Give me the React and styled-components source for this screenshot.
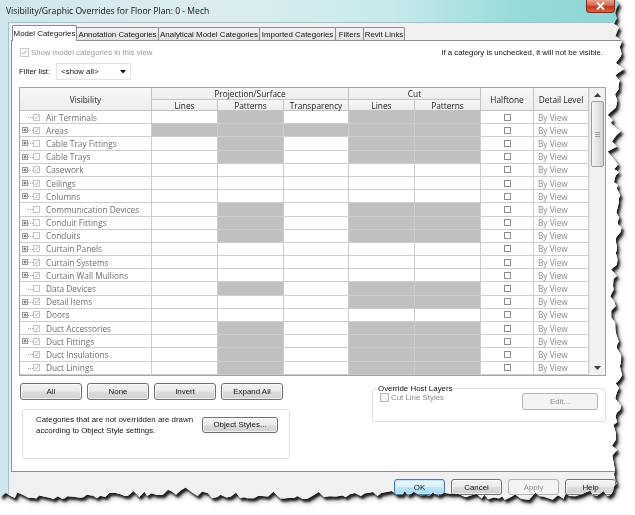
import React from 'react'
import styled, { createGlobalStyle, css } from 'styled-components'

const GlobalStyle = createGlobalStyle`
  html, body {
    margin: 0;
    background: #fff;
  }
  body {
    font-family: "Liberation Sans", Arial, sans-serif;
  }
`

const seeded = (seed) => () => {
  seed = (seed * 16807) % 2147483647
  return seed / 2147483647
}

// ragged "torn paper" outline round the right and bottom of the dialog
const tornEdge = (() => {
  const r = seeded(11)
  const pts = ['0px 0px']
  for (let y = 0; y < 494; ) {
    const spike = r() > 0.8 ? (r() - 0.5) * 12 : 0
    const x = 616 + 3 * Math.sin(y / 27) + (r() - 0.5) * 7 + spike
    pts.push(`${x.toFixed(1)}px ${y.toFixed(1)}px`)
    y += 2.5 + r() * 4.5
  }
  for (let x = 610; x > 0; ) {
    const spike = r() > 0.82 ? (r() - 0.5) * 10 : 0
    const y = 495 + 2.5 * Math.sin(x / 37) + (r() - 0.5) * 6 + spike
    pts.push(`${x.toFixed(1)}px ${y.toFixed(1)}px`)
    x -= 2.5 + r() * 4.5
  }
  pts.push('0px 493px')
  return pts.join(', ')
})()

const rows = [
  ['Air Terminals', false, true, '.g.gg'],
  ['Areas', true, true, 'ggggg'],
  ['Cable Tray Fittings', true, false, '.g.gg'],
  ['Cable Trays', true, false, '.g.gg'],
  ['Casework', true, true, '.....'],
  ['Ceilings', true, true, '.....'],
  ['Columns', true, true, '.....'],
  ['Communication Devices', false, false, '.g.gg'],
  ['Conduit Fittings', true, false, '.g.gg'],
  ['Conduits', true, false, '.g.gg'],
  ['Curtain Panels', true, true, '.....'],
  ['Curtain Systems', true, true, '.....'],
  ['Curtain Wall Mullions', true, true, '.....'],
  ['Data Devices', false, false, '.g.gg'],
  ['Detail Items', true, true, '...gg'],
  ['Doors', true, true, '.....'],
  ['Duct Accessories', false, true, '.g.gg'],
  ['Duct Fittings', true, true, '.g.gg'],
  ['Duct Insulations', false, true, '.g.gg'],
  ['Duct Linings', false, true, '.g.gg'],
]

const tabs = [
  ['Model Categories', 65],
  ['Annotation Categories', 83],
  ['Analytical Model Categories', 102],
  ['Imported Categories', 77],
  ['Filters', 29],
  ['Revit Links', 42],
]

const COLS = '132px 66px 66px 65px 66px 66px 53px 55px'
const segoe = '"Open Sans", "Noto Sans", sans-serif'

const Stage = styled.div`
  width: 635px;
  height: 515px;
  filter: drop-shadow(2px 3px 1px rgba(0, 0, 0, 0.8)) drop-shadow(1px 1px 2px rgba(0, 0, 0, 0.4));
`

const Dialog = styled.div`
  width: 635px;
  height: 515px;
  clip-path: polygon(${tornEdge});
  background: linear-gradient(90deg, #cfe6ec 0%, #dcedf1 35%, #c6e9ea 62%, #96dad9 82%, #8bd6d5 100%);
  display: flex;
  flex-direction: column;
`

const TitleBar = styled.div`
  height: 22px;
  flex: none;
  display: flex;
  justify-content: space-between;
  align-items: flex-start;
  padding-left: 6px;
  box-sizing: border-box;
`

const Title = styled.div`
  font-family: ${segoe};
  font-size: 8.6px;
  line-height: 22px;
  color: #111;
`

const CloseButton = styled.div`
  width: 29px;
  height: 13px;
  margin-right: 20px;
  border: 1px solid #7a2a1c;
  border-top: none;
  border-radius: 0 0 4px 4px;
  box-sizing: border-box;
  background: linear-gradient(#e9a58f 0%, #d7664b 45%, #c2381f 55%, #d8643f 100%);
  display: flex;
  align-items: center;
  justify-content: center;
`

const Client = styled.div`
  flex: 1;
  margin: 0 8px;
  background: #f0f0f0;
  border-top: 1px solid #9fc3cb;
  border-left: 1px solid #9fc3cb;
  display: flex;
  flex-direction: column;
`

const TabStrip = styled.div`
  height: 17px;
  padding-left: 4px;
  display: flex;
  align-items: flex-end;
`

const Tab = styled.div`
  box-sizing: border-box;
  width: ${(p) => p.$w}px;
  height: ${(p) => (p.$active ? 16 : 13)}px;
  margin-left: -1px;
  margin-bottom: ${(p) => (p.$active ? -1 : 0)}px;
  border: 1px solid #898c95;
  border-bottom: none;
  border-radius: 2px 2px 0 0;
  background: ${(p) => (p.$active ? '#fff' : 'linear-gradient(#f3f3f3, #e2e2e2)')};
  position: relative;
  z-index: ${(p) => (p.$active ? 2 : 1)};
  display: flex;
  align-items: center;
  justify-content: center;
  font-size: 7.9px;
  color: #111;
  white-space: nowrap;
`

const Panel = styled.div`
  box-sizing: border-box;
  margin-left: 2px;
  width: 614px;
  height: 432px;
  border: 1px solid #898c95;
  background: #fff;
  position: relative;
  z-index: 1;
`

const PanelInner = styled.div`
  width: 587px;
  margin-left: 7px;
`

const ShowRow = styled.div`
  margin-top: 5px;
  height: 12px;
  display: flex;
  align-items: center;
  justify-content: space-between;
  font-size: 7.8px;
`

const ShowLabel = styled.label`
  display: flex;
  align-items: center;
  gap: 2px;
  margin-left: 1px;
  color: #9a9a9a;
`

const Note = styled.span`
  color: #111;
  margin-right: 3px;
`

const Box = styled.span`
  box-sizing: border-box;
  display: inline-flex;
  align-items: center;
  justify-content: center;
  flex: none;
  width: ${(p) => p.$size}px;
  height: ${(p) => p.$size}px;
  border: 1px solid ${(p) => p.$border || '#c6c6c6'};
  background: ${(p) => p.$bg || '#fbfbfb'};
`

const FilterRow = styled.div`
  margin-top: 5px;
  height: 17px;
  display: flex;
  align-items: center;
  gap: 6px;
  font-size: 7.8px;
  color: #111;
`

const Select = styled.div`
  box-sizing: border-box;
  width: 75px;
  height: 17px;
  border: 1px solid #e3e3e3;
  background: #fff;
  display: flex;
  align-items: center;
  justify-content: space-between;
  padding: 0 4px 0 4px;
`

const TableFrame = styled.div`
  margin-top: 7px;
  border: 1px solid #a3a3a3;
  display: flex;
`

const Grid = styled.div`
  width: 569px;
`

const HeadGrid = styled.div`
  display: grid;
  grid-template-columns: ${COLS};
  grid-template-rows: 12px 11px;
`

const Head = styled.div`
  box-sizing: border-box;
  grid-column: ${(p) => p.$col};
  grid-row: ${(p) => p.$row};
  border-right: 1px solid #c3c3c3;
  border-bottom: 1px solid #c3c3c3;
  background: linear-gradient(#f7f7f7, #ededed);
  display: flex;
  align-items: center;
  justify-content: center;
  font-family: ${segoe};
  font-size: 8.3px;
  color: #222;
  white-space: nowrap;
`

const Row = styled.div`
  display: grid;
  grid-template-columns: ${COLS};
  height: 13.2px;
`

const Cell = styled.div`
  box-sizing: border-box;
  border-right: 1px solid #cdcdcd;
  border-bottom: 1px solid #cdcdcd;
  background: ${(p) => (p.$gray ? '#c0c0c0' : '#fff')};
  display: flex;
  align-items: center;
  justify-content: ${(p) => (p.$center ? 'center' : 'flex-start')};
  font-family: ${segoe};
  font-size: 8.3px;
  white-space: nowrap;
  overflow: hidden;
`

const NameCell = styled(Cell)`
  padding-left: 2px;
  color: #6f6f6f;
`

const Expander = styled.span`
  box-sizing: border-box;
  width: 6px;
  height: 6px;
  flex: none;
  border: 1px solid ${(p) => (p.$hidden ? 'transparent' : '#9b9b9b')};
  background: #fff;
  display: inline-flex;
`

const Connector = styled.span`
  width: 5px;
  flex: none;
  border-top: 1px dotted #a5a5a5;
  margin-top: 1px;
`

const Name = styled.span`
  margin-left: 6px;
`

const ByView = styled(Cell)`
  padding-left: 4px;
  color: #8a8a8a;
`

const Scrollbar = styled.div`
  box-sizing: border-box;
  width: 16px;
  border-left: 1px solid #e4e4e4;
  background: #f1f1f1;
  display: flex;
  flex-direction: column;
  align-items: center;
`

const Arrow = styled.div`
  height: 13px;
  flex: none;
  display: flex;
  align-items: center;
  justify-content: center;
`

const Thumb = styled.div`
  box-sizing: border-box;
  width: 13px;
  height: 66px;
  border: 1px solid #9b9b9b;
  border-radius: 2px;
  background: linear-gradient(90deg, #f4f4f4, #e4e4e4 50%, #d4d4d4);
  display: flex;
  align-items: center;
  justify-content: center;
`

const Spacer = styled.div`
  flex: 1;
`

const Bottom = styled.div`
  margin-top: 7px;
  display: flex;
  justify-content: space-between;
  align-items: flex-start;
`

const LeftColumn = styled.div`
  margin-left: 1px;
`

const ButtonRow = styled.div`
  display: grid;
  grid-template-columns: repeat(4, 62px);
  gap: 5px;
`

const Button = styled.button`
  box-sizing: border-box;
  width: ${(p) => p.$w || 62}px;
  height: ${(p) => p.$h || 17}px;
  margin-top: ${(p) => p.$top || 0}px;
  padding: 0;
  border: 1px solid #707070;
  border-radius: 3px;
  background: linear-gradient(#f2f2f2 0%, #ebebeb 48%, #dddddd 52%, #cfcfcf 100%);
  box-shadow: inset 0 0 0 1px rgba(255, 255, 255, 0.7);
  font-family: "Liberation Sans", Arial, sans-serif;
  font-size: 7.9px;
  color: #111;
  ${(p) =>
    p.$focus &&
    css`
      border-color: #3c7fb1;
      box-shadow: inset 0 0 0 1px #bfe6f9;
      background: linear-gradient(#eaf6fd 0%, #d9f0fc 48%, #bee6fd 52%, #a7d9f5 100%);
    `}
  ${(p) =>
    p.disabled &&
    css`
      border-color: #adb2b5;
      background: #f4f4f4;
      box-shadow: none;
      color: #8d8d8d;
    `}
`

const InfoBox = styled.div`
  box-sizing: border-box;
  margin: 9px 0 0 2px;
  width: 268px;
  height: 50px;
  border: 1px solid #dedede;
  border-radius: 3px;
  display: flex;
  align-items: flex-start;
  justify-content: space-between;
  padding: 4px 11px 0 13px;
`

const InfoText = styled.p`
  margin: 0;
  font-size: 7.9px;
  line-height: 11.5px;
  color: #111;
`

const Group = styled.fieldset`
  box-sizing: border-box;
  margin: 2px 0 0;
  width: 234px;
  height: 37px;
  padding: 0 7px 0 7px;
  border: 1px solid #d9e1e5;
  border-radius: 3px;
  display: flex;
  justify-content: space-between;
  align-items: flex-start;
`

const Legend = styled.legend`
  padding: 0 1px;
  margin-left: -3px;
  font-size: 7.9px;
  line-height: 8px;
  color: #111;
`

const CutLabel = styled.label`
  display: flex;
  align-items: center;
  gap: 2px;
  font-size: 7.9px;
  color: #8a8a8a;
`

const Footer = styled.div`
  display: flex;
  gap: 6px;
  padding: 7px 0 0 385px;
`

const Check = ({ color = '#b9b9b9' }) => (
  <svg width="5" height="5" viewBox="0 0 5 5">
    <path d="M0.4 2.6 L1.8 4 L4.6 0.6" fill="none" stroke={color} strokeWidth="1" />
  </svg>
)

const Plus = () => (
  <svg width="4" height="4" viewBox="0 0 4 4">
    <path d="M0.5 2 H3.5 M2 0.5 V3.5" stroke="#3a3a3a" strokeWidth="0.8" />
  </svg>
)

const App = () => (
  <>
    <GlobalStyle />
    <Stage>
      <Dialog>
        <TitleBar>
          <Title>Visibility/Graphic Overrides for Floor Plan: 0 - Mech</Title>
          <CloseButton>
            <svg width="9" height="8" viewBox="0 0 9 8">
              <path d="M1 0.5 L8 7.5 M8 0.5 L1 7.5" stroke="#fff" strokeWidth="1.8" />
            </svg>
          </CloseButton>
        </TitleBar>
        <Client>
          <TabStrip>
            {tabs.map(([label, w], i) => (
              <Tab key={label} $w={w} $active={i === 0}>
                {label}
              </Tab>
            ))}
          </TabStrip>
          <Panel>
            <PanelInner>
              <ShowRow>
                <ShowLabel>
                  <Box $size={9} $border="#c9c9c9">
                    <Check color="#a9a9a9" />
                  </Box>
                  Show model categories in this view
                </ShowLabel>
                <Note>If a category is unchecked, it will not be visible.</Note>
              </ShowRow>
              <FilterRow>
                Filter list:
                <Select>
                  <span>&lt;show all&gt;</span>
                  <svg width="6" height="4" viewBox="0 0 6 4">
                    <path d="M0 0 H6 L3 3.5 Z" fill="#111" />
                  </svg>
                </Select>
              </FilterRow>
              <TableFrame>
                <Grid>
                  <HeadGrid>
                    <Head $col="1" $row="1 / 3">Visibility</Head>
                    <Head $col="2 / 5" $row="1">Projection/Surface</Head>
                    <Head $col="5 / 7" $row="1">Cut</Head>
                    <Head $col="7" $row="1 / 3">Halftone</Head>
                    <Head $col="8" $row="1 / 3">Detail Level</Head>
                    <Head $col="2" $row="2">Lines</Head>
                    <Head $col="3" $row="2">Patterns</Head>
                    <Head $col="4" $row="2">Transparency</Head>
                    <Head $col="5" $row="2">Lines</Head>
                    <Head $col="6" $row="2">Patterns</Head>
                  </HeadGrid>
                  {rows.map(([name, expand, checked, gray]) => (
                    <Row key={name}>
                      <NameCell>
                        <Expander $hidden={!expand}>{expand && <Plus />}</Expander>
                        <Connector />
                        <Box $size={7}>{checked && <Check />}</Box>
                        <Name>{name}</Name>
                      </NameCell>
                      {gray.split('').map((g, i) => (
                        <Cell key={i} $gray={g === 'g'} />
                      ))}
                      <Cell $center>
                        <Box $size={7} $border="#8e8e8e" $bg="#fff" />
                      </Cell>
                      <ByView>By View</ByView>
                    </Row>
                  ))}
                </Grid>
                <Scrollbar>
                  <Arrow>
                    <svg width="7" height="4" viewBox="0 0 7 4">
                      <path d="M0 4 L3.5 0 L7 4 Z" fill="#3c3c3c" />
                    </svg>
                  </Arrow>
                  <Thumb>
                    <svg width="5" height="5" viewBox="0 0 5 5">
                      <path d="M0 0.5 H5 M0 2.5 H5 M0 4.5 H5" stroke="#8a8a8a" strokeWidth="0.8" />
                    </svg>
                  </Thumb>
                  <Spacer />
                  <Arrow>
                    <svg width="7" height="4" viewBox="0 0 7 4">
                      <path d="M0 0 L3.5 4 L7 0 Z" fill="#3c3c3c" />
                    </svg>
                  </Arrow>
                </Scrollbar>
              </TableFrame>
              <Bottom>
                <LeftColumn>
                  <ButtonRow>
                    <Button>All</Button>
                    <Button>None</Button>
                    <Button>Invert</Button>
                    <Button>Expand All</Button>
                  </ButtonRow>
                  <InfoBox>
                    <InfoText>
                      Categories that are not overridden are drawn
                      <br />
                      according to Object Style settings.
                    </InfoText>
                    <Button $w={76} $h={16} $top={3}>
                      Object Styles...
                    </Button>
                  </InfoBox>
                </LeftColumn>
                <Group>
                  <Legend>Override Host Layers</Legend>
                  <CutLabel>
                    <Box $size={9} $border="#b9b9b9" $bg="#f4f4f4" />
                    Cut Line Styles
                  </CutLabel>
                  <Button $w={76} $h={17} disabled>
                    Edit...
                  </Button>
                </Group>
              </Bottom>
            </PanelInner>
          </Panel>
          <Footer>
            <Button $w={51} $h={16} $focus>
              OK
            </Button>
            <Button $w={51} $h={16}>Cancel</Button>
            <Button $w={51} $h={16} disabled>
              Apply
            </Button>
            <Button $w={51} $h={16}>Help</Button>
          </Footer>
        </Client>
      </Dialog>
    </Stage>
  </>
)

export default App
